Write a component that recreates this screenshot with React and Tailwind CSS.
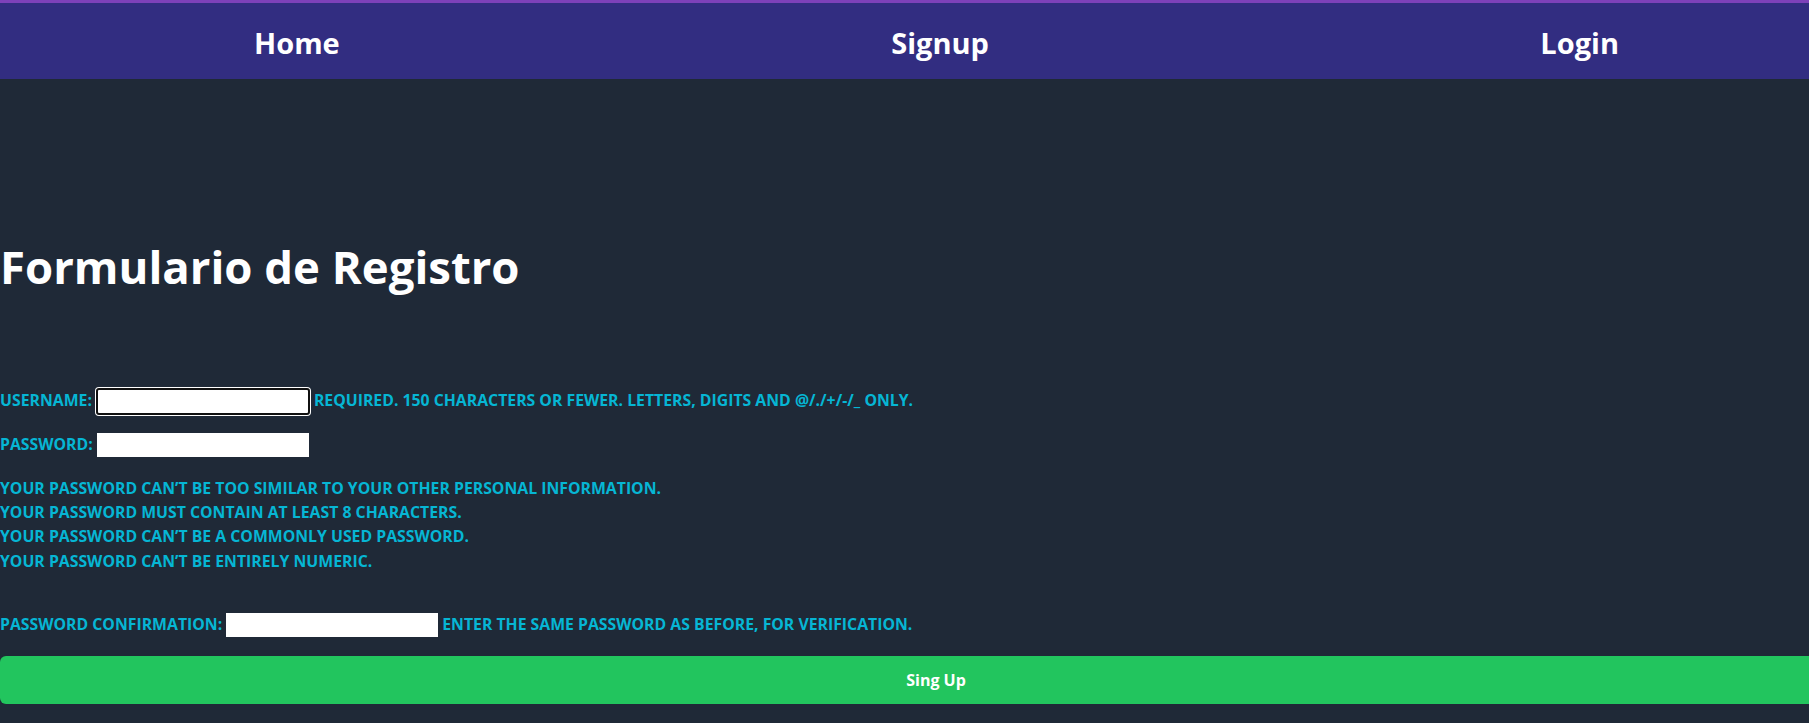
import React from "react";

const rules = [
  "Your password can’t be too similar to your other personal information.",
  "Your password must contain at least 8 characters.",
  "Your password can’t be a commonly used password.",
  "Your password can’t be entirely numeric.",
];

const App = () => {
  return (
    <div className="min-h-screen overflow-hidden bg-[#1f2937] font-['Open_Sans',sans-serif]">
      {/* top nav */}
      <nav className="flex h-[79px] items-center justify-between border-t-[3px] border-[#7d41b9] bg-[#322d81] pt-1 pl-[254px] pr-[190px] text-[29px] font-bold text-white">
        <a href="#">Home</a>
        <a href="#">Signup</a>
        <a href="#">Login</a>
      </nav>

      <main className="pt-[165px]">
        <h1 className="text-[45.5px] leading-none font-bold text-white">
          Formulario de Registro
        </h1>

        <form className="mt-[98px] text-[15.8px] font-bold uppercase text-[#06b6d4]">
          <div className="flex h-[27px] items-center gap-1">
            <label>Username:</label>
            <input
              type="text"
              className="h-[27px] w-[214px] rounded-[3px] border-2 border-[#111] bg-white shadow-[0_0_0_1px_#fff] outline-none"
            />
            <span>Required. 150 characters or fewer. Letters, digits and @/./+/-/_ only.</span>
          </div>

          <div className="mt-[18px] flex h-6 items-center gap-1">
            <label>Password:</label>
            <input type="password" className="h-6 w-[212px] bg-white outline-none" />
          </div>

          <ul className="mt-[19px] leading-[24.4px]">
            {rules.map((rule) => (
              <li key={rule}>{rule}</li>
            ))}
          </ul>

          <div className="mt-10 flex h-6 items-center gap-1">
            <label>Password confirmation:</label>
            <input type="password" className="h-6 w-[212px] bg-white outline-none" />
            <span>Enter the same password as before, for verification.</span>
          </div>

          <button
            type="submit"
            className="mt-[19px] h-12 w-[1872px] rounded-md bg-[#22c55e] text-base font-bold normal-case text-white"
          >
            Sing Up
          </button>
        </form>
      </main>
    </div>
  );
};

export default App;
